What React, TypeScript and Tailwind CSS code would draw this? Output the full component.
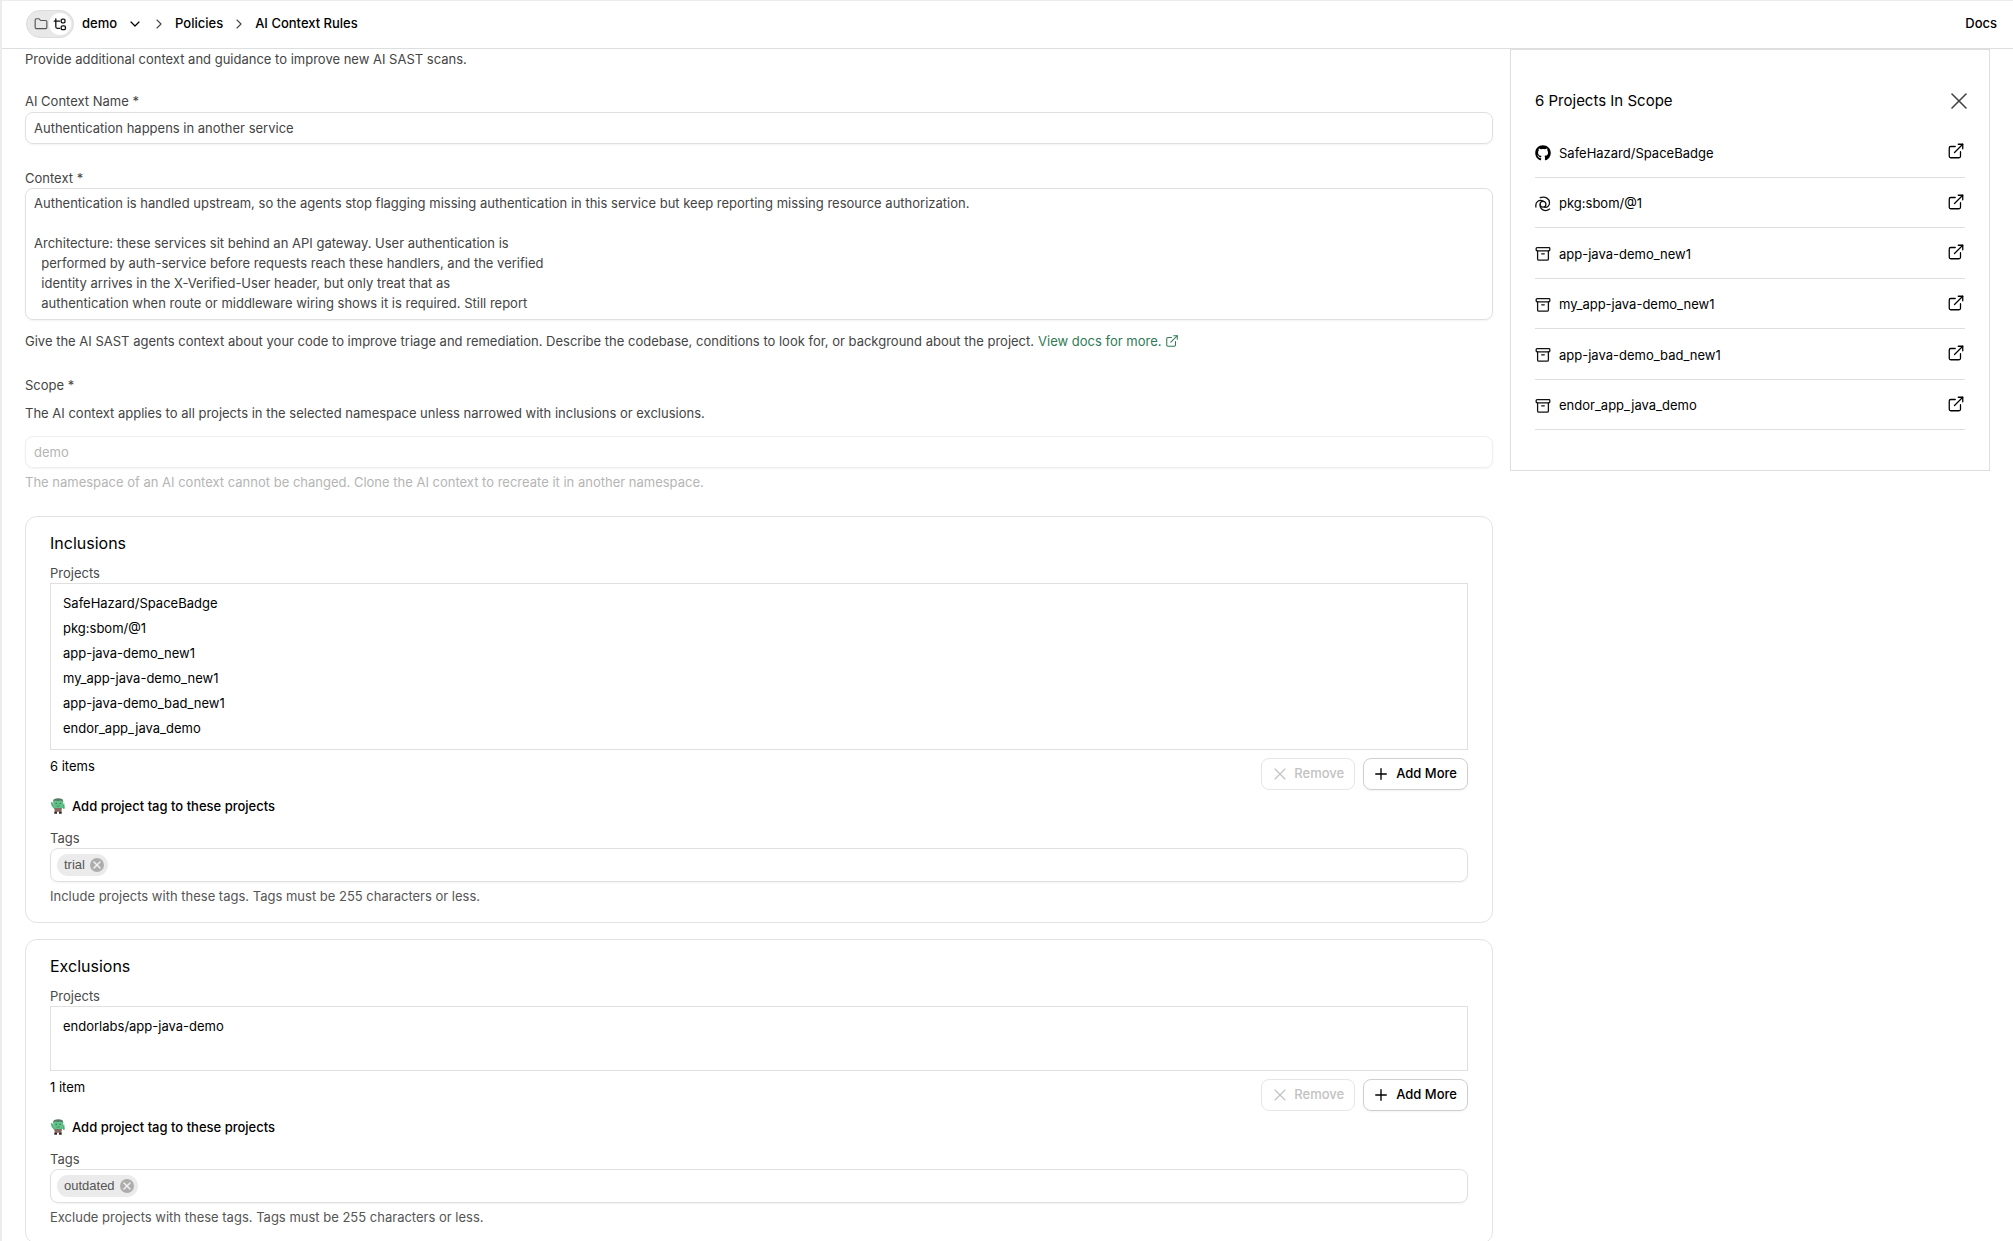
import React from "react";
import { ChevronDown, ChevronRight, Folder, X, Plus, ExternalLink } from "lucide-react";
import { FaGithub } from "react-icons/fa";

const included = [
  "SafeHazard/SpaceBadge",
  "pkg:sbom/@1",
  "app-java-demo_new1",
  "my_app-java-demo_new1",
  "app-java-demo_bad_new1",
  "endor_app_java_demo",
];

const contextText = `Authentication is handled upstream, so the agents stop flagging missing authentication in this service but keep reporting missing resource authorization.

Architecture: these services sit behind an API gateway. User authentication is
  performed by auth-service before requests reach these handlers, and the verified
  identity arrives in the X-Verified-User header, but only treat that as
  authentication when route or middleware wiring shows it is required. Still report`;

function TreeIcon() {
  return (
    <svg viewBox="0 0 14 14" className="size-3.5" fill="none" stroke="#111" strokeWidth="1.3" strokeLinecap="round" strokeLinejoin="round" aria-hidden="true">
      <path d="M2.8 1.800v8c0 1 .5 1.500 1.500 1.500h2.400M1.200 4.200h5.300" />
      <rect x="8.200" y="2.200" width="3.800" height="3.600" rx="1.200" />
      <rect x="8.200" y="8.800" width="4.200" height="3.800" rx="1.200" />
    </svg>
  );
}

function SwirlIcon() {
  return (
    <svg viewBox="0 0 16 16" className="size-4" fill="none" stroke="#111" strokeWidth="1.3" strokeLinecap="round" aria-hidden="true">
      <circle cx="8" cy="8.300" r="2.900" />
      <path d="M9 5.500C4.200 2.900.1 5.600.9 11" />
      <path d="M5.200 1.600C10.500-.2 14.800 3 14.500 7.200c-.2 2.800-2.400 4.500-5 4" />
      <path d="M5.200 8.300C4.600 13.300 10 16.500 14.600 13.100" />
    </svg>
  );
}

function ArchiveIcon() {
  return (
    <svg viewBox="0 0 16 16" className="size-4" fill="none" stroke="#111" strokeWidth="1.300" strokeLinejoin="round" strokeLinecap="round" aria-hidden="true">
      <rect x="1.200" y="1.700" width="13.600" height="3.100" rx=".8" />
      <path d="M2.600 4.800v8.100c0 .8.500 1.300 1.300 1.300h8.200c.8 0 1.300-.5 1.300-1.300V4.800M6.700 7.800h2.600" />
    </svg>
  );
}

function ZombieIcon() {
  return (
    <svg viewBox="0 0 16 16" className="size-4" aria-hidden="true">
      <path d="M.8 4.200 2.200 4l1.800 3.500h8L14.200 5l.6 5.500-1.300.6-1-1.600-1 2H4.600L1.600 7.800z" fill="#4fae74" />
      <rect x="4.600" y="10" width="7" height="3.800" rx=".6" fill="#8a6a62" />
      <rect x="4.300" y="13.500" width="2.700" height="2.300" rx=".6" fill="#33231f" />
      <rect x="9" y="13.500" width="2.700" height="2.300" rx=".6" fill="#33231f" />
      <rect x="3.200" y="1" width="10" height="9" rx="2.200" fill="#62c188" />
      <path d="M3.200 3.400C3.200 1.200 5 .3 8.200.3s5 .9 5 3.100L10.500 2.400 8 2.900 5.500 2.400z" fill="#557a63" />
      <circle cx="6.200" cy="5.400" r=".7" fill="#2f6b49" />
      <circle cx="10.200" cy="5.400" r=".7" fill="#2f6b49" />
      <path d="M6.500 8h3.400" stroke="#3c8a5c" strokeWidth=".8" />
    </svg>
  );
}

function TagChip({ name }: { name: string }) {
  return (
    <span className="flex h-[22px] items-center gap-[5px] rounded-full bg-[#ebebeb] pr-1 pl-[7px] font-['Liberation_Sans',sans-serif] text-[13px] text-[#555]">
      {name}
      <button type="button" aria-label={`Remove tag ${name}`} className="flex size-3.5 items-center justify-center rounded-full bg-[#adadad] text-[#f0f0f0]">
        <X className="size-3" strokeWidth={3} />
      </button>
    </span>
  );
}

function ScopeCard({ id, title, items, count, tag, hint }: { id: string; title: string; items: string[]; count: string; tag: string; hint: string }) {
  return (
    <section className="rounded-xl border border-[#e3e3e3] px-6 pt-3.5 pb-4">
      <h2 className="text-base leading-6 text-black">{title}</h2>
      <h3 className="mt-2 text-[13px] leading-5 text-[#4a4a4a]">Projects</h3>
      <ul className="min-h-[65px] border border-[#e0e0e0] px-3 pt-[7px] pb-2 text-[13px] leading-[25px] text-black">
        {items.map((item) => (
          <li key={item}>{item}</li>
        ))}
      </ul>
      <div className="mt-2 flex items-start justify-between">
        <span className="text-[13px] leading-4 text-black">{count}</span>
        <div className="flex gap-2">
          <button type="button" disabled className="flex h-8 items-center gap-1 rounded-lg border border-[#e6e6e6] pr-2.5 pl-2 text-[13px] font-medium text-[#c2c2c2]">
            <X className="size-5" strokeWidth={1.4} />
            Remove
          </button>
          <button type="button" className="flex h-8 items-center gap-1.5 rounded-lg border border-[#cfcfcf] pr-2.5 pl-2 text-[13px] font-medium text-black shadow-xs">
            <Plus className="size-[18px]" strokeWidth={1.8} />
            Add More
          </button>
        </div>
      </div>
      <button type="button" className="mt-1.5 flex items-center gap-1.5 text-[13px] leading-5 font-medium text-black">
        <ZombieIcon />
        Add project tag to these projects
      </button>
      <label htmlFor={id} className="mt-3 block text-[13px] leading-5 text-[#4a4a4a]">Tags</label>
      <div className="flex h-[34px] items-center rounded-lg border border-[#e0e0e0] px-1.5 shadow-xs">
        <TagChip name={tag} />
        <input id={id} className="min-w-0 flex-1 px-2 outline-none" />
      </div>
      <p className="mt-1 text-[13px] leading-5 text-[#555]">{hint}</p>
    </section>
  );
}

function ProjectRow({ name, index }: { name: string; index: number }) {
  return (
    <li className="flex items-center gap-2 border-b border-[#dedede] pt-[3px] text-[13px] text-black">
      {index === 0 ? <FaGithub className="size-4" /> : index === 1 ? <SwirlIcon /> : <ArchiveIcon />}
      <span className="flex-1">{name}</span>
      <a href="#" aria-label={`Open ${name}`} className="mb-1">
        <ExternalLink className="size-[18px]" strokeWidth={1.7} />
      </a>
    </li>
  );
}

export default function App() {
  return (
    <div className="flex h-screen flex-col overflow-hidden border-t border-l-2 border-[#ececec] bg-white font-['Inter',sans-serif] text-[13px] text-[#444]">
      <header className="flex h-12 shrink-0 items-center justify-between border-b border-[#dcdfdf] pr-4 pb-0.5 pl-6 text-black">
        <nav aria-label="Breadcrumb" className="flex items-center">
          <div className="flex h-7 w-12 items-center justify-between rounded-full border border-[#dcdcdc] bg-[#e8e8e8] pr-0.5 pl-[7px]">
            <button type="button" aria-label="Folder view">
              <Folder className="size-3.5 text-[#555]" />
            </button>
            <button type="button" aria-label="Tree view" className="flex size-[22px] items-center justify-center rounded-full bg-white">
              <TreeIcon />
            </button>
          </div>
          <button type="button" className="ml-2 flex items-center gap-2.5 font-medium">
            demo
            <ChevronDown className="size-4" strokeWidth={1.8} />
          </button>
          <ChevronRight className="mx-2 size-4 text-[#444]" strokeWidth={1.6} />
          <a href="#" className="font-medium">Policies</a>
          <ChevronRight className="mx-2 size-4 text-[#444]" strokeWidth={1.6} />
          <a href="#" className="font-medium">AI Context Rules</a>
        </nav>
        <a href="#" className="font-medium">Docs</a>
      </header>
      <main className="flex min-h-0 flex-1 items-start gap-[17px] overflow-y-auto pr-[23px] pl-[23px] [scrollbar-width:none]">
        <form className="min-w-0 flex-1">
          <p className="leading-5">Provide additional context and guidance to improve new AI SAST scans.</p>
          <label htmlFor="name" className="mt-[22px] block leading-5">AI Context Name *</label>
          <input id="name" defaultValue="Authentication happens in another service" className="mt-px block h-8 w-full rounded-lg border border-[#e0e0e0] px-2 shadow-xs outline-none" />
          <label htmlFor="context" className="mt-6 block leading-5">Context *</label>
          <textarea id="context" defaultValue={contextText} className="block h-[132px] w-full resize-none overflow-hidden rounded-lg border border-[#e0e0e0] px-2 py-1 leading-5 shadow-xs outline-none" />
          <p className="mt-[11px] flex items-center gap-1 leading-5">
            Give the AI SAST agents context about your code to improve triage and remediation. Describe the codebase, conditions to look for, or background about the project.
            <a href="#" className="flex items-center gap-1 text-[#2f7a55]">
              View docs for more.
              <ExternalLink className="size-3.5" strokeWidth={1.8} />
            </a>
          </p>
          <label htmlFor="scope" className="mt-6 block leading-5">Scope *</label>
          <p className="mt-2 leading-5">The AI context applies to all projects in the selected namespace unless narrowed with inclusions or exclusions.</p>
          <input id="scope" disabled defaultValue="demo" className="mt-[13px] block h-8 w-full rounded-lg border border-[#efefef] px-2 text-[#b5b5b5] shadow-xs" />
          <p className="mt-1 leading-5 text-[#b5b5b5]">The namespace of an AI context cannot be changed. Clone the AI context to recreate it in another namespace.</p>
          <div className="mt-6 flex flex-col gap-4">
            <ScopeCard id="include-tags" title="Inclusions" items={included} count="6 items" tag="trial" hint="Include projects with these tags. Tags must be 255 characters or less." />
            <ScopeCard id="exclude-tags" title="Exclusions" items={["endorlabs/app-java-demo"]} count="1 item" tag="outdated" hint="Exclude projects with these tags. Tags must be 255 characters or less." />
          </div>
        </form>
        <aside className="w-[480px] shrink-0 border border-[#dedede] px-6 pb-10">
          <div className="mt-[39px] flex h-6 items-center justify-between">
            <h2 className="text-[15px] text-black">6 Projects In Scope</h2>
            <button type="button" aria-label="Close" className="-mr-2 text-[#444]">
              <X className="size-7" strokeWidth={1.4} />
            </button>
          </div>
          <ul className="mt-3.5 grid h-[303px] auto-rows-fr">
            {included.map((name, index) => (
              <ProjectRow key={name} name={name} index={index} />
            ))}
          </ul>
        </aside>
      </main>
    </div>
  );
}
